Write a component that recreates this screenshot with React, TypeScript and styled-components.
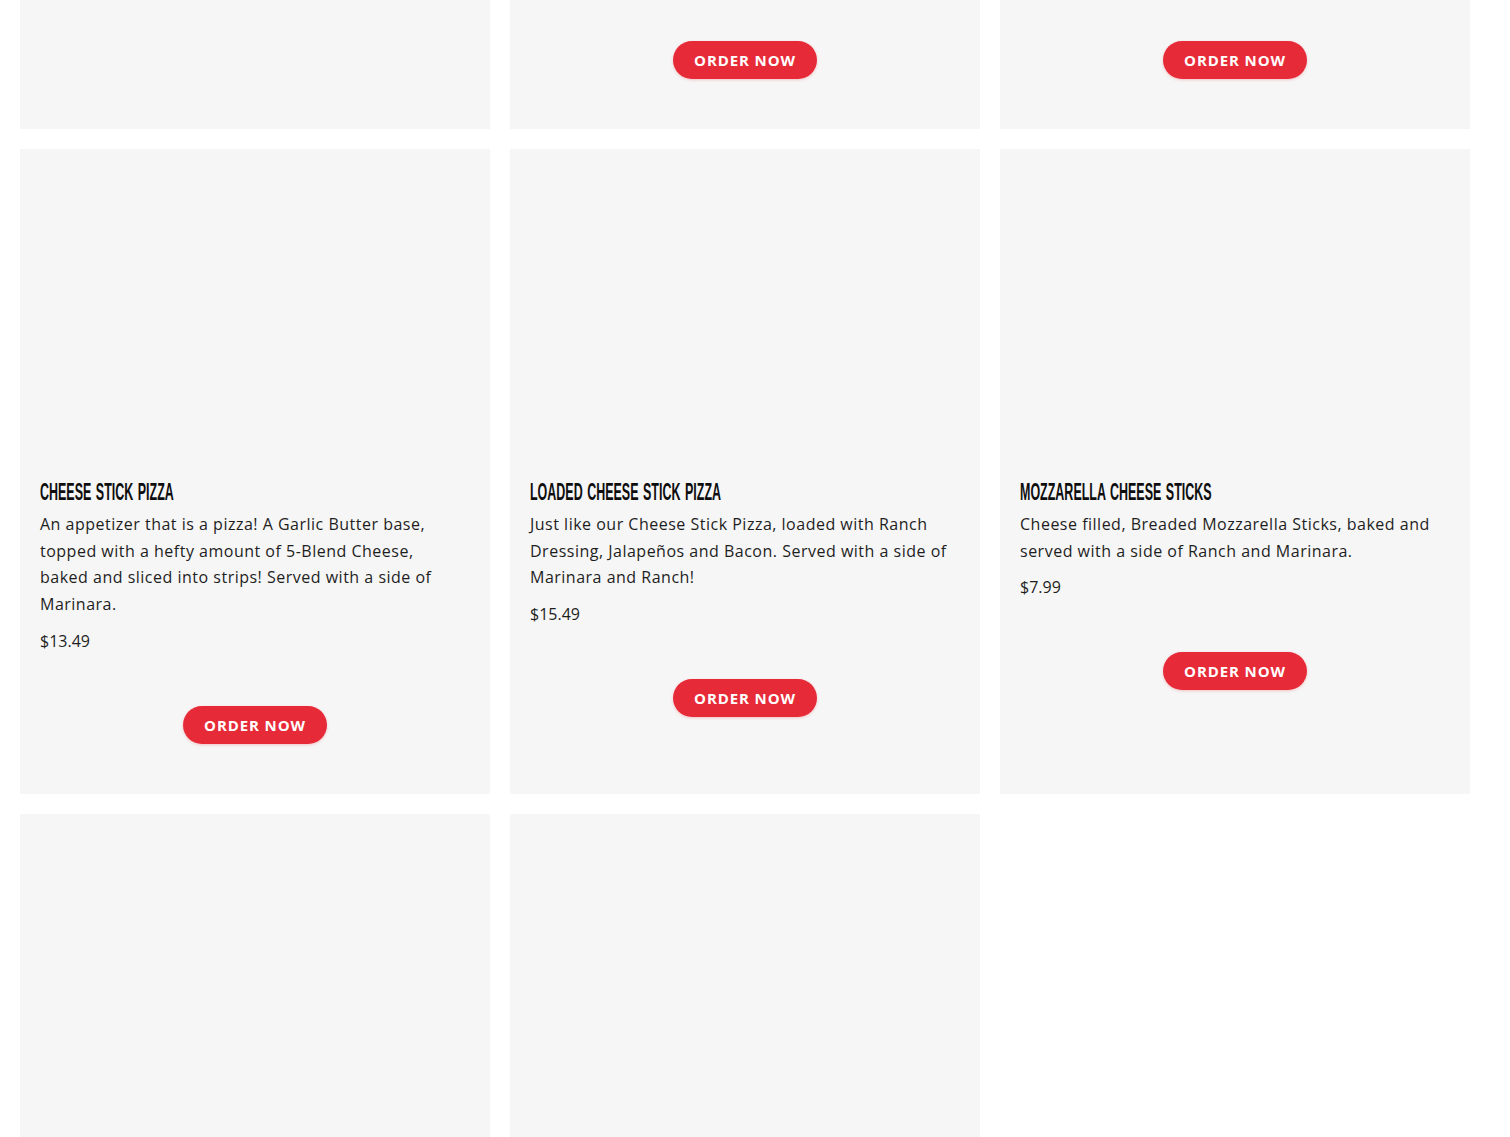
import React, { FunctionComponent } from "react";
import styled, { createGlobalStyle } from "styled-components";

const GlobalStyle = createGlobalStyle`
  html, body {
    margin: 0;
    padding: 0;
    background: #ffffff;
    overflow: hidden;
  }
  body {
    font-family: "Open Sans", "Liberation Sans", sans-serif;
    color: #1b1b1b;
  }
`;

const Page = styled.div`
  height: 1137px;
  overflow: hidden;
`;

const Grid = styled.div`
  display: grid;
  grid-template-columns: repeat(3, 470px);
  gap: 20px;
  padding: 0 40px 0 20px;
  margin-top: -462px;
`;

const Card = styled.div`
  background: #f6f6f6;
  padding: 20px 20px 50px;
  display: flex;
  flex-direction: column;
`;

const Picture = styled.div`
  height: 300px;
  margin-bottom: 8px;
`;

const Title = styled.h3`
  margin: 0;
  font-family: "Liberation Sans Narrow", "Liberation Sans", sans-serif;
  font-weight: 700;
  font-size: 24px;
  line-height: 30px;
  text-transform: uppercase;
  letter-spacing: 0;
  word-spacing: 2px;
  display: inline-block;
  transform: scaleX(0.52);
  transform-origin: left center;
  white-space: nowrap;
  color: #0e0e0e;
`;

const Text = styled.p`
  margin: 4px 0 0;
  max-width: 424px;
  font-size: 16px;
  line-height: 26.6px;
  letter-spacing: 0.5px;
  color: #1e1e1e;
`;

const Price = styled.p`
  margin: 10px 0 0;
  font-size: 16px;
  line-height: 26px;
  color: #1e1e1e;
`;

const Order = styled.button`
  align-self: center;
  margin-top: 52px;
  width: 144px;
  height: 38px;
  border: none;
  border-radius: 19px;
  background: #e72a38;
  color: #fff;
  font-family: "Open Sans", "Liberation Sans", sans-serif;
  font-weight: 700;
  font-size: 15px;
  letter-spacing: 0.9px;
  text-transform: uppercase;
  box-shadow: 0 1px 3px rgba(231, 42, 56, 0.25);
  cursor: pointer;
`;

type Item = {
  name: string;
  text?: string;
  price?: string;
};

const items: Item[] = [
  {
    name: "Garlic Bread",
  },
  {
    name: "Breadsticks",
    text: "Fresh baked Breadsticks brushed with Garlic Butter, served with a side of Marinara.",
    price: "$6.99",
  },
  {
    name: "Bone-In Wings",
    text: "Crispy oven baked Wings tossed in your choice of sauce, served with Ranch.",
    price: "$12.99",
  },
  {
    name: "Cheese Stick Pizza",
    text: "An appetizer that is a pizza! A Garlic Butter base, topped with a hefty amount of 5-Blend Cheese, baked and sliced into strips! Served with a side of Marinara.",
    price: "$13.49",
  },
  {
    name: "Loaded Cheese Stick Pizza",
    text: "Just like our Cheese Stick Pizza, loaded with Ranch Dressing, Jalapeños and Bacon. Served with a side of Marinara and Ranch!",
    price: "$15.49",
  },
  {
    name: "Mozzarella Cheese Sticks",
    text: "Cheese filled, Breaded Mozzarella Sticks, baked and served with a side of Ranch and Marinara.",
    price: "$7.99",
  },
  {
    name: "Cinnamon Sticks",
    text: "Sweet Cinnamon Sticks topped with icing.",
    price: "$6.49",
  },
  {
    name: "Chocolate Chip Cookie",
    text: "A giant warm Chocolate Chip Cookie, sliced and ready to share.",
    price: "$7.49",
  },
];

const MenuCard: FunctionComponent<Item> = ({ name, text, price }) => {
  return (
    <Card>
      <Picture />
      <div>
        <Title>{name}</Title>
      </div>
      {text && <Text>{text}</Text>}
      {price && <Price>{price}</Price>}
      <Order>Order Now</Order>
    </Card>
  );
};

export default function App() {
  return (
    <Page>
      <GlobalStyle />
      <Grid>
        {items.map((item) => (
          <MenuCard key={item.name} {...item} />
        ))}
      </Grid>
    </Page>
  );
}
